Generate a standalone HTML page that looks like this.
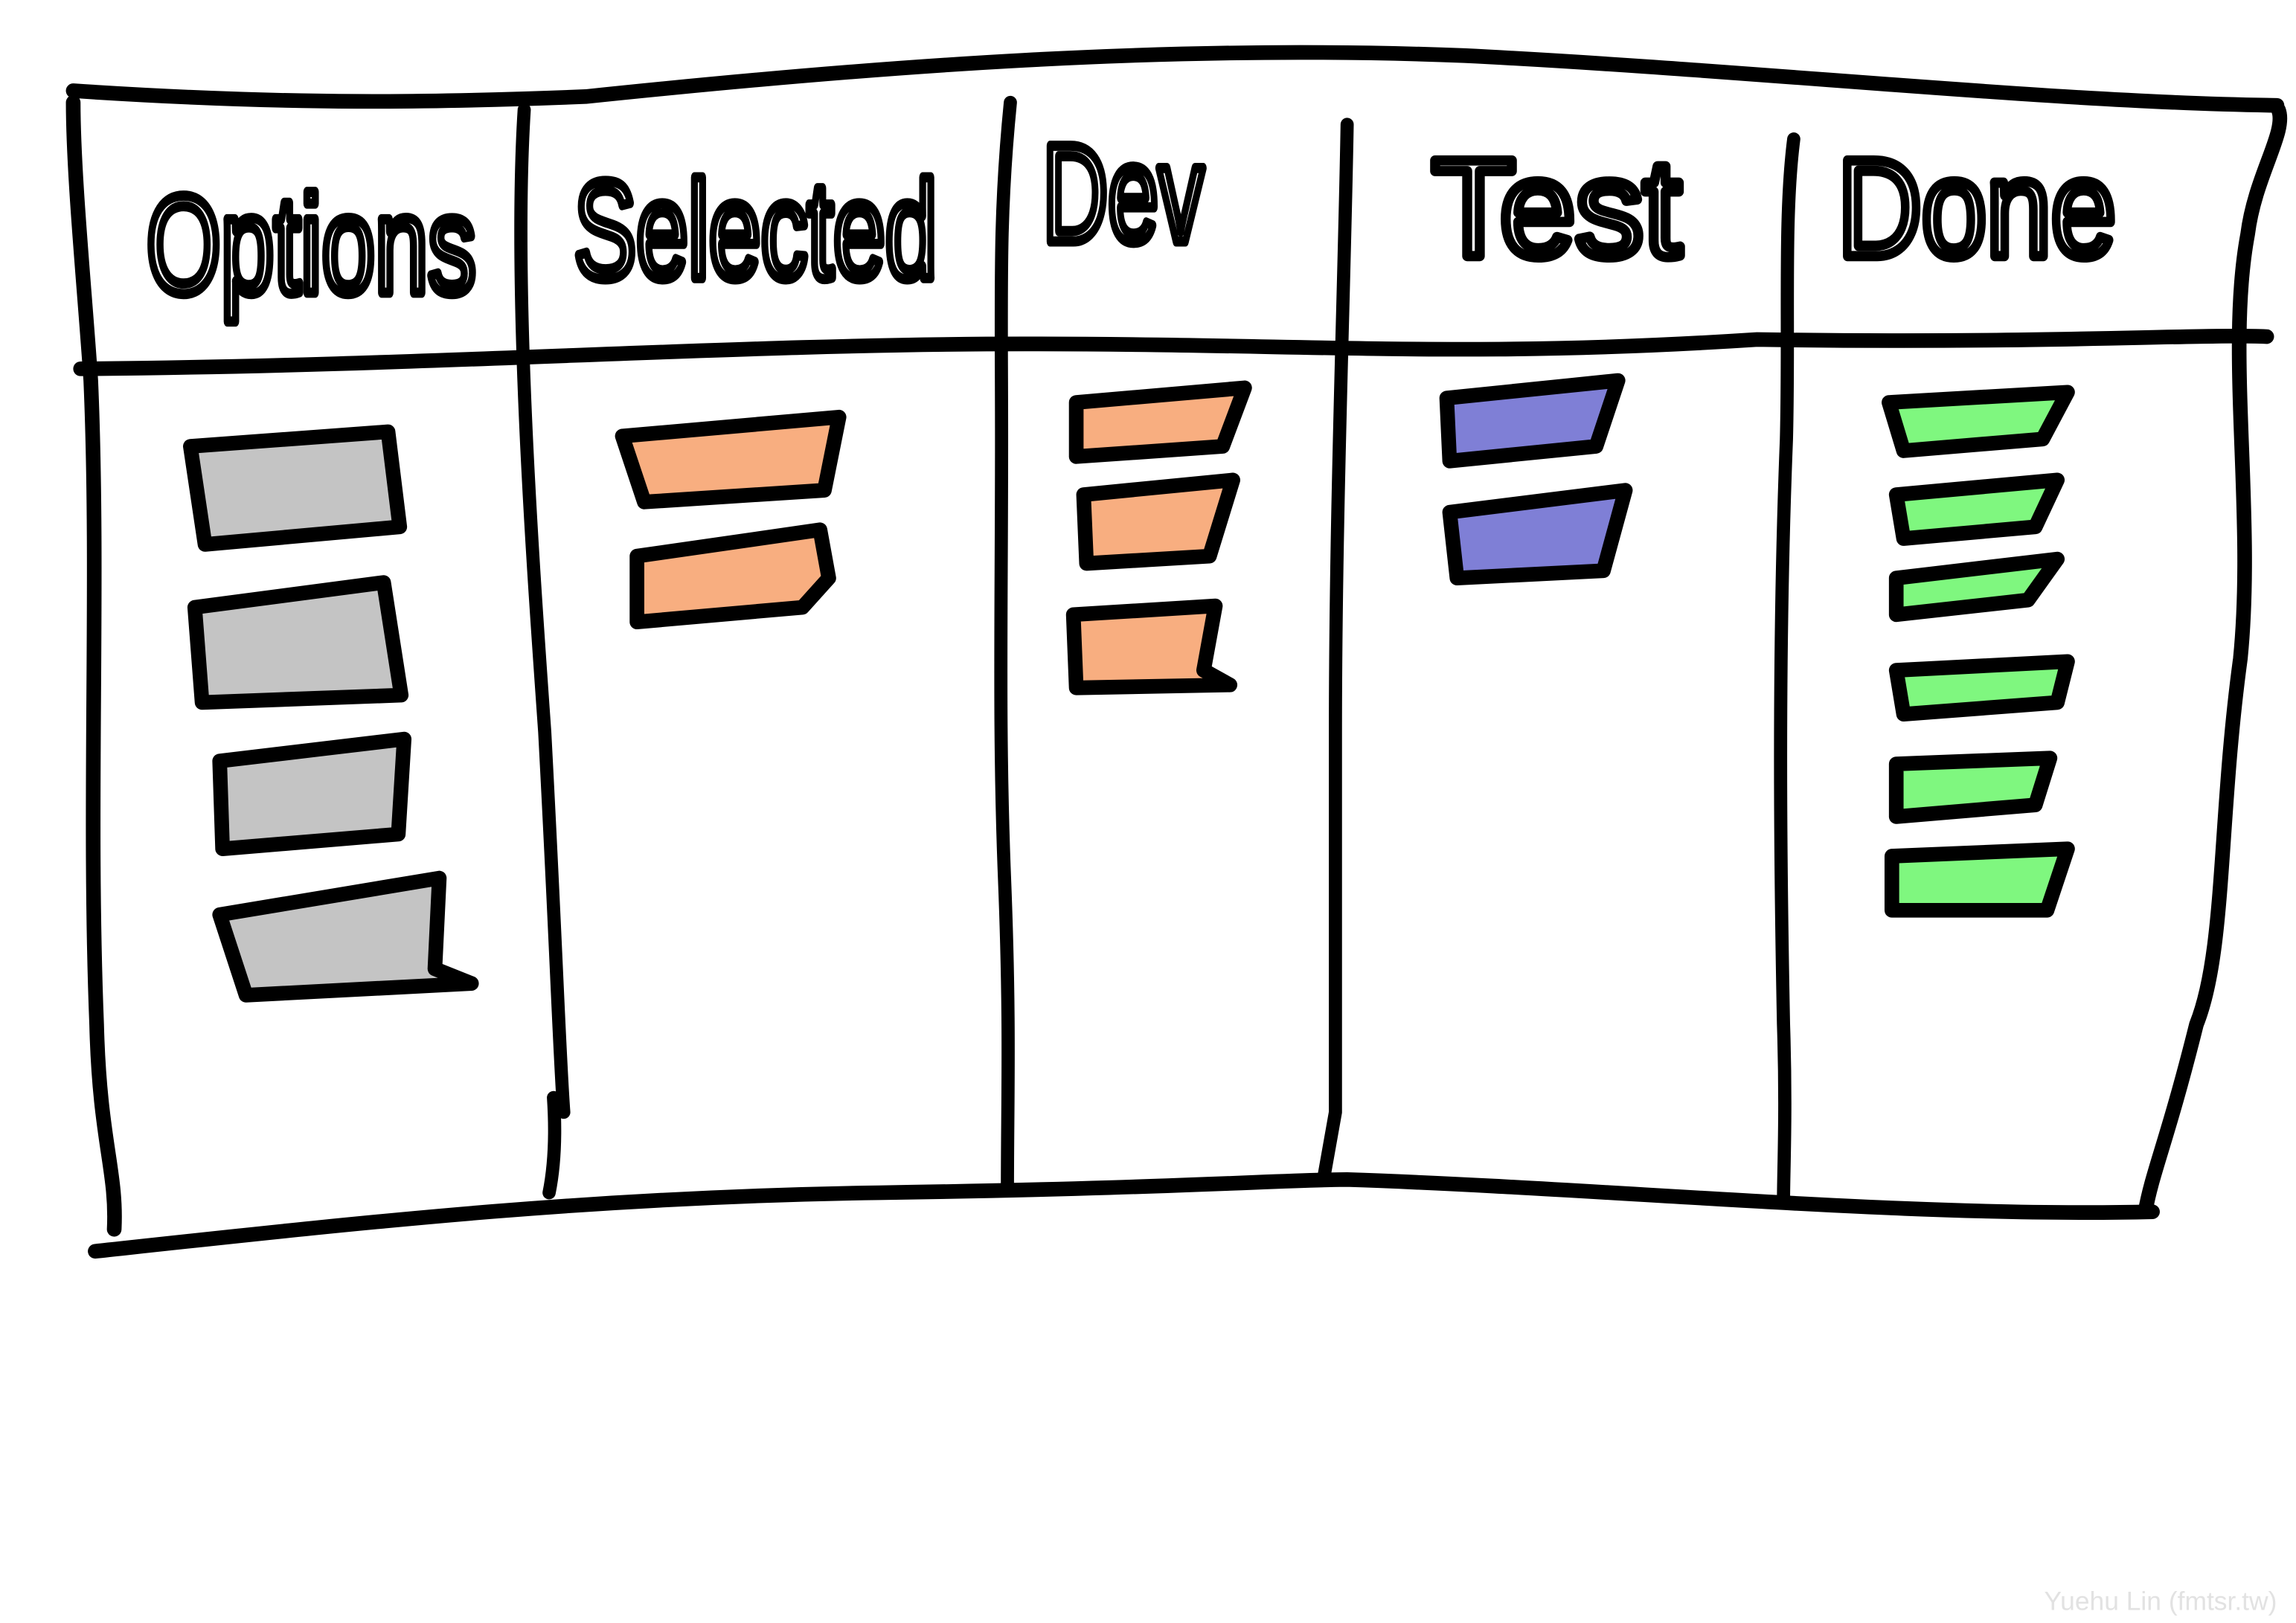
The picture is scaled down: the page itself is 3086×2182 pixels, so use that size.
<!DOCTYPE html>
<html><head><meta charset="utf-8"><style>
html,body{margin:0;padding:0;background:#fff;}
svg{display:block;}
</style></head><body>
<svg width="3086" height="2182" viewBox="0 0 1568 1109" preserveAspectRatio="none" xmlns="http://www.w3.org/2000/svg">
<rect width="1568" height="1109" fill="#fff"/>
<g fill="none" stroke="#000" stroke-linecap="round" stroke-linejoin="round">
<path d="M50 62 C200 72 300 70 400 66 C600 45 800 30 1000 38 C1200 48 1400 70 1555 72" stroke-width="10"/>
<path d="M50 70 C50 120 58 200 62 260 C68 400 60 550 66 700 C68 780 80 800 78 840" stroke-width="10"/>
<path d="M65 855 C250 835 400 818 600 815 C800 812 880 806 920 806 C1100 812 1300 832 1470 828" stroke-width="10"/>
<path d="M1556 75 C1562 90 1540 120 1535 160 C1520 240 1540 350 1530 450 C1515 560 1520 650 1500 700 C1480 780 1470 800 1465 828" stroke-width="10"/>
<path d="M55 252 C300 250 500 235 700 235 C900 235 1000 245 1200 232 C1400 235 1500 228 1548 230" stroke-width="10"/>
<path d="M358 75 C350 200 365 400 372 500 C380 650 382 720 385 760 M378 750 C380 780 378 800 375 815" stroke-width="9"/>
<path d="M690 70 C682 150 684 200 684 300 C684 420 682 500 686 600 C690 700 688 750 688 810" stroke-width="9"/>
<path d="M920 85 C918 200 912 350 912 500 C912 650 912 720 912 760 L904 805" stroke-width="9"/>
<path d="M1225 95 C1218 150 1222 220 1220 300 C1214 450 1216 600 1218 700 C1220 760 1218 800 1218 820" stroke-width="9"/>
</g>
<g font-family="Liberation Sans, sans-serif" font-size="95" fill="none" stroke="#000" stroke-width="7" stroke-linejoin="round">
<text x="100" y="200" textLength="225" lengthAdjust="spacingAndGlyphs">Options</text>
<text x="392" y="190" textLength="248" lengthAdjust="spacingAndGlyphs">Selected</text>
<text x="712" y="165" textLength="110" lengthAdjust="spacingAndGlyphs">Dev</text>
<text x="978" y="175" textLength="170" lengthAdjust="spacingAndGlyphs">Test</text>
<text x="1255" y="175" textLength="190" lengthAdjust="spacingAndGlyphs">Done</text>
</g>
<g stroke="#000" stroke-width="10" stroke-linecap="round" stroke-linejoin="round">
<g fill="#c4c4c4">
<path d="M130 305 L265 295 L273 360 L140 372 Z"/>
<path d="M133 415 L262 398 L274 475 L138 480 Z"/>
<path d="M150 520 L276 505 L272 570 L152 580 Z"/>
<path d="M150 625 L300 600 L297 662 L322 672 L168 680 Z"/>
</g>
<g fill="#f8ae80">
<path d="M425 298 L573 285 L563 335 L440 343 Z"/>
<path d="M435 380 L560 362 L566 395 L548 415 L435 425 Z"/>
<path d="M735 275 L850 265 L835 305 L735 312 Z"/>
<path d="M740 338 L842 328 L826 380 L742 385 Z"/>
<path d="M733 420 L830 414 L822 458 L840 468 L735 470 Z"/>
</g>
<g fill="#7f7fd6">
<path d="M988 272 L1105 260 L1090 305 L990 315 Z"/>
<path d="M990 350 L1110 335 L1095 390 L995 395 Z"/>
</g>
<g fill="#7ff77f">
<path d="M1290 275 L1412 268 L1395 300 L1300 308 Z"/>
<path d="M1295 338 L1405 328 L1390 360 L1300 368 Z"/>
<path d="M1295 395 L1405 382 L1385 410 L1295 420 Z"/>
<path d="M1295 458 L1412 452 L1405 480 L1300 488 Z"/>
<path d="M1295 522 L1400 518 L1390 550 L1295 558 Z"/>
<path d="M1292 585 L1412 580 L1398 622 L1292 622 Z"/>
</g>
</g>
<text x="1555" y="1100" text-anchor="end" font-family="Liberation Sans, sans-serif" font-size="18" fill="#e2e2e2">Yuehu Lin (fmtsr.tw)</text>
</svg>
</body></html>
